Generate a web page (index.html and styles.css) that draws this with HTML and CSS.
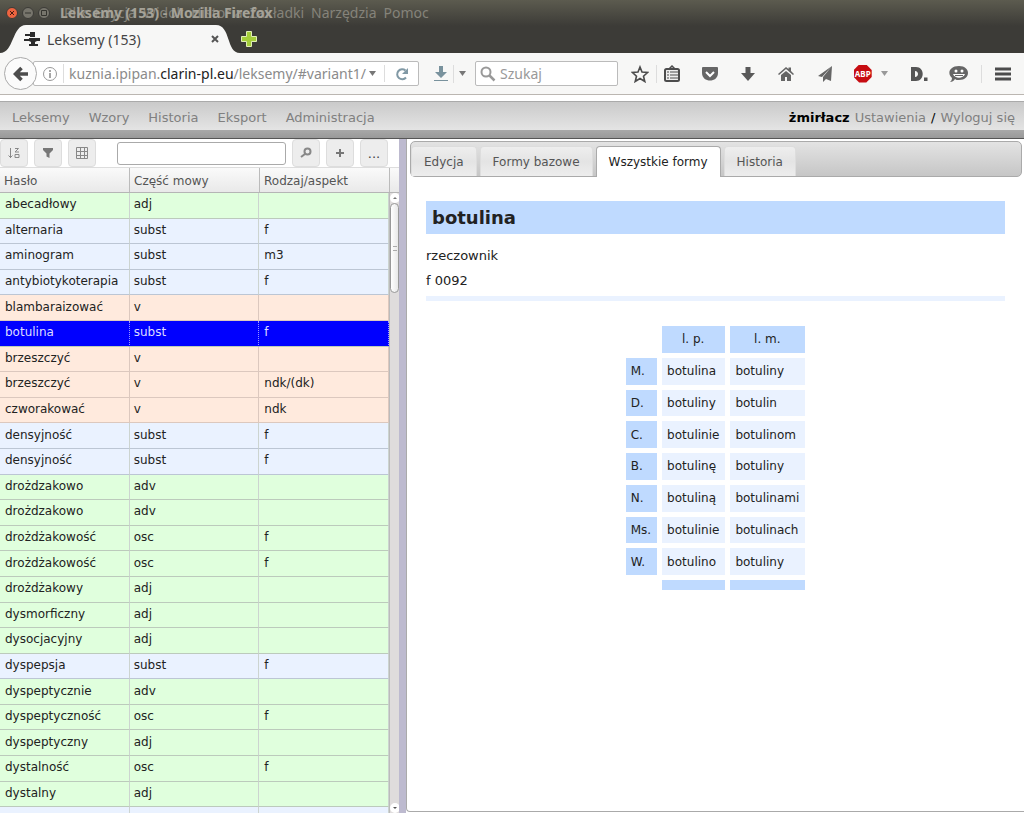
FILE: index.html
```html
<!DOCTYPE html>
<html lang="pl">
  <head>
    <meta charset="UTF-8" />
    <meta name="viewport" content="width=device-width, initial-scale=1">
    <title>Leksemy (153)</title>
    <link rel="stylesheet" href="styles.css">
  </head>
  <body>
    <header class="browser">
      <div class="titlebar">
        <button class="win close" aria-label="Zamknij"><svg width="6" height="6" viewBox="0 0 6 6"><path d="M1 1l4 4M5 1L1 5" stroke="#4a1c10"/></svg></button>
        <button class="win" aria-label="Minimalizuj"><svg width="6" height="6" viewBox="0 0 6 6"><path d="M0 3h6" stroke="#35342f"/></svg></button>
        <button class="win" aria-label="Maksymalizuj"><svg width="6" height="6" viewBox="0 0 6 6"><path d="M.5 .5h5v5h-5z" fill="none" stroke="#35342f"/></svg></button>
        <div class="titles">
          <nav class="globalmenu">
            <span>Plik</span><span>Edycja</span><span>Widok</span><span>Historia</span><span>Zakładki</span><span>Narzędzia</span><span>Pomoc</span>
          </nav>
          <span class="window-title">Leksemy (153) - Mozilla Firefox</span>
        </div>
      </div>
      <div class="tabstrip">
        <div class="btab">
          <svg class="tab-shape" viewBox="0 0 240 28" preserveAspectRatio="none"><path d="M0 28C14 28 12 0 26 0H216C231 0 226 28 240 28Z" fill="#f7f7f6"/></svg>
          <svg class="favicon" width="16" height="16" viewBox="0 0 16 16" fill="#2b2b2b"><path d="M6 1h5v5H6V5H1V3h5zM0 8h5V7h11v3h-3l-2 1v2h3v2H5v-2h2v-2L5 10H0z"/></svg>
          <span class="btab-title">Leksemy (153)</span>
          <button class="btab-close" aria-label="Zamknij kartę"><svg width="8" height="8" viewBox="0 0 8 8"><path d="M1 1l6 6M7 1L1 7" stroke="#555" stroke-width="2"/></svg></button>
        </div>
        <button class="newtab" aria-label="Nowa karta"><svg width="18" height="18" viewBox="0 0 18 18"><path d="M6.500 1.500h5v5h5v5h-5v5h-5v-5h-5v-5h5z" fill="#a4cd3a" stroke="#e0efb4"/></svg></button>
      </div>
      <div class="navbar">
        <button class="back" aria-label="Wstecz"><svg width="16" height="16" viewBox="0 0 16 16"><path d="M8.500 2L2.500 8l6 6M3 8h12" fill="none" stroke="#4c4c4c" stroke-width="3.600"/></svg></button>
        <div class="urlbar">
          <svg width="16" height="16" viewBox="0 0 16 16"><circle cx="8" cy="8" r="6.500" fill="none" stroke="#999"/><path d="M8 7v5M8 4v2" stroke="#888" stroke-width="1.500"/></svg>
          <a class="url" href="#variant1">kuznia.ipipan.<b>clarin-pl.eu</b>/leksemy/#variant1/</a>
          <svg class="caret" width="8" height="5" viewBox="0 0 8 5"><path d="M0 0h7L3.500 5z" fill="#777"/></svg>
          <button class="reload" aria-label="Odśwież"><svg width="14" height="14" viewBox="0 0 14 14"><path d="M11 10.500A5 5 0 1 1 10.500 3.500" fill="none" stroke="#8199a5" stroke-width="2"/><path d="M13 1v6H7z" fill="#8199a5"/></svg></button>
        </div>
        <div class="dl">
          <svg width="14" height="16" viewBox="0 0 14 16"><path d="M5 0h4v6h4l-6 6-6-6h4z" fill="#79929d"/><path d="M0 14.500h14" stroke="#79929d"/></svg>
          <i class="sep"></i>
          <svg width="8" height="5" viewBox="0 0 8 5"><path d="M0 0h7L3.500 5z" fill="#777"/></svg>
        </div>
        <label class="search">
          <svg width="16" height="16" viewBox="0 0 16 16"><circle cx="6" cy="6" r="4.500" fill="none" stroke="#999" stroke-width="2"/><path d="M9.500 9.500l5 5" stroke="#999" stroke-width="2.500"/></svg>
          <input type="text" placeholder="Szukaj" aria-label="Szukaj">
        </label>
        <div class="tools">
          <div class="group">
            <svg width="18" height="18" viewBox="0 0 18 18"><path d="M9 2l2 5 5.500.500-4 3.700 1.300 5.300L9 13.500l-4.800 3 1.300-5.300-4-3.700L7 7z" fill="none" stroke="#4c4c4c" stroke-width="1.600"/></svg>
            <i class="sep"></i>
            <svg width="16" height="18" viewBox="0 0 16 18"><path d="M5 4l3-3 3 3" fill="none" stroke="#4c4c4c" stroke-width="1.500"/><rect x="1" y="4" width="14" height="12" rx="1.500" fill="#eee" stroke="#4c4c4c" stroke-width="2"/><path d="M3 7h2M6 7h8M3 10h2M6 10h8M3 13h2M6 13h8" stroke="#4c4c4c"/></svg>
          </div>
          <svg width="18" height="18" viewBox="0 0 18 18"><path d="M2 2h14q1 0 1 1v5c0 10-16 10-16 0V3q0-1 1-1z" fill="#666"/><path d="M5 7l4 4 4-4" fill="none" stroke="#fff" stroke-width="2"/></svg>
          <svg width="16" height="16" viewBox="0 0 16 16"><path d="M5.500 1h5v6H15l-7 8-7-8h4.500z" fill="#595959"/></svg>
          <svg width="18" height="18" viewBox="0 0 18 18"><path d="M1 9l8-7 2.500 2V2.500H14V6l3 3-1 1-7-6-7 6z" fill="#666"/><path d="M4 10l5-4 5 4v6h-4v-4H8v4H4z" fill="#666"/></svg>
          <svg width="16" height="18" viewBox="0 0 16 18"><path d="M15 1L1 11l4 1zM15 1L6 12v5l3-3 5 2z" fill="#666"/></svg>
          <div class="group abp-wrap">
            <span class="abp">ABP</span>
            <svg width="8" height="5" viewBox="0 0 8 5"><path d="M0 0h7L3.500 5z" fill="#999"/></svg>
          </div>
          <svg width="18" height="16" viewBox="0 0 18 16"><path fill-rule="evenodd" d="M1 1h5c9 0 9 14 0 14H1zM5 5v6c4 0 4-6 0-6zM14 11.500h3.500V15H14z" fill="#555"/></svg>
          <div class="group last">
            <svg width="20" height="18" viewBox="0 0 20 18"><path d="M10 1c12 0 12 14 0 14-2 0-3 0-4-1-1 2-3 3-5 3 1-1 2-2 2-4C-2 9 0 1 10 1z" fill="#666"/><circle cx="7" cy="6" r="1.500" fill="#fff"/><circle cx="13" cy="6" r="1.500" fill="#fff"/><path d="M4 9h12c-2 5-10 5-12 0z" fill="#fff"/><path d="M6 10.500h8" stroke="#666"/></svg>
            <i class="sep"></i>
            <svg width="18" height="16" viewBox="0 0 18 16"><path d="M1 3h16M1 8h16M1 13h16" stroke="#4c4c4c" stroke-width="3"/></svg>
          </div>
        </div>
      </div>
    </header>

    <div class="menubar">
      <nav>
        <a href="#">Leksemy</a><a href="#">Wzory</a><a href="#">Historia</a><a href="#">Eksport</a><a href="#">Administracja</a>
      </nav>
      <div class="user"><b>żmirłacz</b><a href="#">Ustawienia</a><span>/</span><a href="#">Wyloguj się</a></div>
    </div>

    <main class="panes">
      <section class="left">
        <div class="toolbar">
          <button aria-label="Sortuj"><svg width="12" height="12" viewBox="0 0 12 12" fill="none" stroke="#888"><path d="M2.500 1v10M.5 8.500l2 2 2-2M7 1.500h3.500L7 5h4M7 7.500h4v3H7z"/></svg></button>
          <button aria-label="Filtruj"><svg width="10" height="10" viewBox="0 0 10 10"><path d="M0 0h10v2L6.500 5.500V10l-3-1.500v-3L0 2z" fill="#777"/></svg></button>
          <button aria-label="Kolumny"><svg width="12" height="12" viewBox="0 0 12 12"><path d="M.5 .5h11v11H.5zM4.500 0v12M8.500 0v12M0 4.500h12M0 8.500h12" fill="none" stroke="#888"/></svg></button>
          <input type="text" aria-label="Szukaj leksemu">
          <button aria-label="Szukaj"><svg width="12" height="12" viewBox="0 0 12 12"><circle cx="7.500" cy="4.500" r="3" fill="none" stroke="#888" stroke-width="2"/><path d="M5 7l-4 3" stroke="#888" stroke-width="2"/></svg></button>
          <button aria-label="Dodaj"><svg width="10" height="10" viewBox="0 0 10 10"><path d="M5 1v8M1 5h8" stroke="#777" stroke-width="2"/></svg></button>
          <button>...</button>
        </div>
        <div class="grid-head"><span>Hasło</span><span>Część mowy</span><span>Rodzaj/aspekt</span></div>
        <div class="grid-body">
          <table class="lexemes">
            <tr class="adj"><td>abecadłowy</td><td>adj</td><td></td></tr>
            <tr class="subst"><td>alternaria</td><td>subst</td><td>f</td></tr>
            <tr class="subst"><td>aminogram</td><td>subst</td><td>m3</td></tr>
            <tr class="subst"><td>antybiotykoterapia</td><td>subst</td><td>f</td></tr>
            <tr class="verb"><td>blambaraizować</td><td>v</td><td></td></tr>
            <tr class="selected"><td>botulina</td><td>subst</td><td>f</td></tr>
            <tr class="verb"><td>brzeszczyć</td><td>v</td><td></td></tr>
            <tr class="verb"><td>brzeszczyć</td><td>v</td><td>ndk/(dk)</td></tr>
            <tr class="verb"><td>czworakować</td><td>v</td><td>ndk</td></tr>
            <tr class="subst"><td>densyjność</td><td>subst</td><td>f</td></tr>
            <tr class="subst"><td>densyjność</td><td>subst</td><td>f</td></tr>
            <tr class="adj"><td>drożdzakowo</td><td>adv</td><td></td></tr>
            <tr class="adj"><td>drożdzakowo</td><td>adv</td><td></td></tr>
            <tr class="adj"><td>drożdżakowość</td><td>osc</td><td>f</td></tr>
            <tr class="adj"><td>drożdżakowość</td><td>osc</td><td>f</td></tr>
            <tr class="adj"><td>drożdżakowy</td><td>adj</td><td></td></tr>
            <tr class="adj"><td>dysmorficzny</td><td>adj</td><td></td></tr>
            <tr class="adj"><td>dysocjacyjny</td><td>adj</td><td></td></tr>
            <tr class="subst"><td>dyspepsja</td><td>subst</td><td>f</td></tr>
            <tr class="adj"><td>dyspeptycznie</td><td>adv</td><td></td></tr>
            <tr class="adj"><td>dyspeptyczność</td><td>osc</td><td>f</td></tr>
            <tr class="adj"><td>dyspeptyczny</td><td>adj</td><td></td></tr>
            <tr class="adj"><td>dystalność</td><td>osc</td><td>f</td></tr>
            <tr class="adj"><td>dystalny</td><td>adj</td><td></td></tr>
            <tr class="subst"><td>dziesiętnik</td><td>subst</td><td>m3</td></tr>
          </table>
          <div class="scrollbar">
            <svg class="arrow" width="10" height="10" viewBox="0 0 10 10"><path d="M3 6l2-2 2 2z" fill="#777"/></svg>
            <div class="thumb"><i></i></div>
            <svg class="arrow down" width="10" height="10" viewBox="0 0 10 10"><path d="M3 4l2 2 2-2z" fill="#555"/></svg>
          </div>
        </div>
      </section>

      <div class="splitter"></div>

      <section class="right">
        <div class="tabs">
          <button>Edycja</button>
          <button>Formy bazowe</button>
          <button class="active">Wszystkie formy</button>
          <button>Historia</button>
        </div>
        <article class="entry">
          <h1>botulina</h1>
          <p>rzeczownik</p>
          <p>f 0092</p>
          <hr>
          <table class="forms">
            <tr><td class="blank"></td><th class="col">l. p.</th><th class="col">l. m.</th></tr>
            <tr><th>M.</th><td>botulina</td><td>botuliny</td></tr>
            <tr><th>D.</th><td>botuliny</td><td>botulin</td></tr>
            <tr><th>C.</th><td>botulinie</td><td>botulinom</td></tr>
            <tr><th>B.</th><td>botulinę</td><td>botuliny</td></tr>
            <tr><th>N.</th><td>botuliną</td><td>botulinami</td></tr>
            <tr><th>Ms.</th><td>botulinie</td><td>botulinach</td></tr>
            <tr><th>W.</th><td>botulino</td><td>botuliny</td></tr>
            <tr class="foot"><td class="blank"></td><th></th><th></th></tr>
          </table>
        </article>
      </section>
    </main>
  </body>
</html>
```
FILE: styles.css
```css
* {
  box-sizing: border-box;
}

body {
  margin: 0;
  height: 100vh;
  display: flex;
  flex-direction: column;
  overflow: hidden;
  font-family: "DejaVu Sans", sans-serif;
  font-size: 12px;
  color: #222;
  background: #fff;
}

button {
  font: inherit;
  padding: 0;
  border: 0;
  background: none;
}

svg {
  flex: none;
}

/* browser window */
.browser {
  flex: none;
  font-family: "Noto Sans", sans-serif;
  background: linear-gradient(#5c5b4f, #3c3b37 26px);
}

.titlebar {
  height: 25px;
  display: flex;
  align-items: center;
  gap: 4px;
  padding-left: 6px;
}

.win {
  width: 12px;
  height: 12px;
  display: flex;
  align-items: center;
  justify-content: center;
  border-radius: 50%;
  background: #77756c;
  border: 1px solid #3c3b37;
}

.win.close {
  background: #ee6440;
}

.titles {
  display: grid;
  margin-left: 6px;
  font-size: 14px;
  line-height: 24px;
  white-space: nowrap;
}

.titles > * {
  grid-area: 1 / 1;
}

.globalmenu {
  display: flex;
  gap: 7px;
  padding-left: 4px;
  color: #85837a;
}

.window-title {
  font-weight: bold;
  color: #a5a298;
}

.tabstrip {
  height: 28px;
  display: flex;
  align-items: center;
}

.btab {
  position: relative;
  width: 240px;
  height: 28px;
  display: flex;
  align-items: center;
  padding: 0 21px 0 24px;
  font-size: 14px;
  color: #444;
}

.btab > * {
  position: relative;
}

.btab .tab-shape {
  position: absolute;
  inset: 0;
  width: 100%;
  height: 100%;
}

.btab-title {
  flex: 1;
  margin-left: 7px;
}

.btab-close,
.newtab {
  display: flex;
}

.navbar {
  height: 42px;
  display: flex;
  align-items: center;
  padding: 0 12px 0 4px;
  background: #f7f7f6;
  border-bottom: 1px solid #bbb6b1;
}

.back {
  z-index: 1;
  width: 33px;
  height: 33px;
  display: flex;
  align-items: center;
  justify-content: center;
  border: 1px solid #aaa;
  border-radius: 50%;
  background: #fbfbfb;
}

.urlbar {
  width: 386px;
  height: 25px;
  display: flex;
  align-items: center;
  margin-left: -4px;
  padding-left: 8px;
  border: 1px solid #bbb;
  border-radius: 2px;
  background: #fff;
}

.url {
  flex: 1;
  margin-left: 5px;
  padding-left: 5px;
  border-left: 1px solid #ddd;
  font-size: 14px;
  line-height: 19px;
  color: #8b8b8b;
  text-decoration: none;
  white-space: nowrap;
}

.url b {
  font-weight: normal;
  color: #222;
}

.reload {
  width: 34px;
  height: 17px;
  display: flex;
  align-items: center;
  justify-content: center;
  margin-left: 7px;
  border-left: 1px solid #ddd;
}

.dl {
  display: flex;
  align-items: center;
  gap: 5px;
  margin: 0 8px 0 15px;
}

.sep {
  width: 1px;
  height: 18px;
  background: #ddd;
}

.search {
  width: 143px;
  height: 25px;
  display: flex;
  align-items: center;
  gap: 4px;
  padding-left: 4px;
  border: 1px solid #bbb;
  border-radius: 2px;
  background: #fff;
}

.search input {
  width: 100px;
  padding: 0;
  border: 0;
  outline: 0;
  font: 14px "Noto Sans", sans-serif;
}

.search input::placeholder {
  color: #999;
}

.tools {
  flex: 1;
  display: flex;
  align-items: center;
  justify-content: space-between;
  margin-left: 13px;
}

.group {
  display: flex;
  align-items: center;
  gap: 7px;
}

.group.abp-wrap {
  gap: 9px;
}

.group.last {
  gap: 12px;
}

.abp {
  width: 18px;
  height: 18px;
  background: #c70d12;
  clip-path: polygon(30% 0, 70% 0, 100% 30%, 100% 70%, 70% 100%, 30% 100%, 0 70%, 0 30%);
  color: #fff;
  font-size: 8px;
  font-weight: bold;
  line-height: 18px;
  text-align: center;
}

/* application menu */
.menubar {
  flex: none;
  height: 38px;
  display: flex;
  justify-content: space-between;
  margin-top: 6px;
  padding: 0 9px 0 12px;
  border-top: 1px solid #aaa;
  border-bottom: 1px solid #555;
  background: linear-gradient(#cacaca, #e4e4e4 28px, #a8a8a8 28px, #999);
  font-size: 13px;
  line-height: 31px;
  color: #000;
}

.menubar nav {
  display: flex;
  gap: 19px;
}

.user {
  display: flex;
  gap: 5px;
}

.menubar a {
  color: #808080;
  text-decoration: none;
}

.panes {
  flex: 1;
  min-height: 0;
  display: flex;
}

/* lexeme list */
.left {
  flex: 0 0 399px;
  min-width: 0;
  display: flex;
  flex-direction: column;
}

.toolbar {
  flex: none;
  height: 28px;
  display: flex;
  align-items: center;
  gap: 6px;
  padding-right: 11px;
}

.toolbar button {
  flex: 0 0 28px;
  height: 28px;
  display: flex;
  align-items: center;
  justify-content: center;
  border: 1px solid #ddd;
  border-radius: 4px;
  background: #ededed;
  font-size: 13px;
  color: #444;
}

.toolbar input {
  flex: 1;
  min-width: 0;
  height: 23px;
  margin-left: 15px;
  border: 1px solid #aaa;
  border-radius: 3px;
}

.grid-head {
  flex: none;
  height: 26px;
  display: flex;
  border-top: 1px solid #ddd;
  border-bottom: 1px solid #b5b5b5;
  background: linear-gradient(#fafafa, #e9e9e9);
  color: #555;
  line-height: 26px;
}

.grid-head span {
  width: 130px;
  padding-left: 4px;
  border-right: 1px solid #bbb;
}

.grid-body {
  flex: 1;
  min-height: 0;
  display: flex;
  overflow: hidden;
}

.lexemes {
  flex: none;
  width: 389px;
  height: 640px;
  table-layout: fixed;
  border-collapse: separate;
  border-spacing: 0;
}

.lexemes td {
  padding: 0 0 2px 5px;
  border-right: 1px solid #ccd4d0;
  border-bottom: 1px solid #bccabc;
}

.lexemes td:nth-child(2) {
  padding-left: 4px;
}

.adj {
  background: #e0ffdd;
}

.subst {
  background: #eaf2ff;
}

.verb {
  background: #ffeadd;
}

.lexemes .subst td {
  border-bottom-color: #bcc6d4;
}

.lexemes .verb td {
  border-color: #dcc8be;
}

.selected {
  background: #00f;
  color: #ddf;
}

.lexemes .selected td {
  border-right: 1px dotted #99f;
}

.scrollbar {
  flex: 1;
  min-width: 0;
  display: flex;
  flex-direction: column;
  border-left: 1px solid #bbb;
  background: #dfdcdc;
}

.arrow {
  background: #fff;
  border-radius: 5px;
}

.arrow.down {
  margin-top: auto;
}

.thumb {
  height: 90px;
  display: flex;
  align-items: center;
  justify-content: center;
  border: 1px solid #999;
  border-radius: 5px;
  background: linear-gradient(90deg, #fff, #e8e8e8);
}

.thumb i {
  width: 4px;
  height: 5px;
  border-top: 1px solid #aaa;
  border-bottom: 1px solid #aaa;
}

.splitter {
  flex: 0 0 7px;
  background: #bdbacf;
}

/* lexeme details */
.right {
  flex: 1;
  padding: 2px 2px 0 3px;
  margin-bottom: 1px;
  border: 1px solid #aaa;
  border-top: 0;
  border-right: 0;
  border-radius: 0 0 0 4px;
}

.tabs {
  height: 36px;
  display: flex;
  align-items: flex-end;
  gap: 3px;
  border: 1px solid #aaa;
  border-radius: 5px;
  background: linear-gradient(#e3e3e3, #c6c6c6);
}

.tabs button {
  height: 30px;
  padding: 0 12px;
  border: 1px solid #ddd;
  border-bottom: 0;
  border-radius: 4px 4px 0 0;
  background: linear-gradient(#eee, #e4e4e4 50%, #ededed);
  color: #555;
}

.tabs .active {
  height: 31px;
  margin-bottom: -1px;
  border-color: #aaa;
  background: #fff;
  color: #222;
}

.entry {
  padding: 24px 17px 0 16px;
}

h1 {
  margin: 0 0 12px;
  padding: 0 6px;
  background: #bfdaff;
  font-size: 18px;
  line-height: 33px;
}

.entry p {
  margin: 0 0 6px;
  font-size: 13px;
  line-height: 19px;
}

hr {
  height: 5px;
  margin: 0;
  border: 0;
  background: #eaf2ff;
}

.forms {
  height: 274px;
  margin: 20px auto 0;
  border-spacing: 5px;
}

.forms td,
.forms th {
  padding: 0 6px 0 5px;
  font-weight: normal;
  text-align: left;
  background: #eaf2ff;
}

.forms th {
  background: #bfdaff;
}

.forms .col {
  text-align: center;
}

.forms .blank {
  background: none;
}

.forms .foot {
  height: 10px;
}
```
